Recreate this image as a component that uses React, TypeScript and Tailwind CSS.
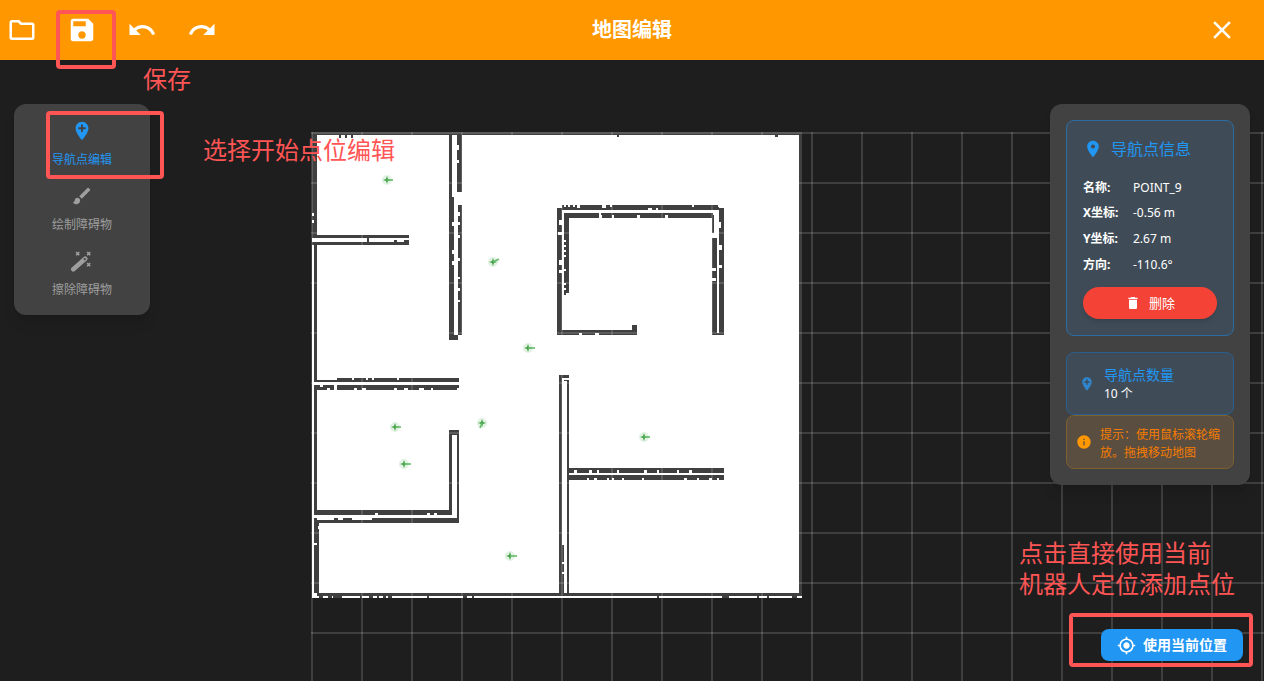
import { MdAddLocation, MdBrush, MdClose, MdDelete, MdInfo, MdLocationOn, MdMyLocation, MdRedo, MdSave, MdUndo } from 'react-icons/md'

const cjk = { fontFamily: '"Noto Sans", "Noto Sans CJK SC", sans-serif' }

// wall pieces of the occupancy map, [x, y, w, h] in page pixels
const walls: number[][] = [
  // outer edge
  [312, 132, 490, 3],
  [799, 132, 3, 464],
  [317, 593, 485, 3],
  [312, 135, 5, 101],
  [314, 245, 3, 136],
  [314, 390, 3, 123],
  [314, 523, 5, 70],
  // stub wall top left
  [312, 235, 97, 3],
  [312, 242, 97, 3],
  [367, 238, 2, 4],
  [394, 240, 3, 2],
  [404, 240, 5, 2],
  // long wall top middle
  [449, 132, 3, 60],
  [457, 132, 5, 60],
  [449, 192, 5, 148],
  [458, 205, 4, 130],
  [454, 335, 4, 5],
  // room
  [557, 208, 5, 125],
  [564, 215, 5, 80],
  [562, 205, 157, 5],
  [564, 213, 149, 5],
  [719, 208, 5, 125],
  [712, 238, 5, 95],
  [712, 215, 2, 18],
  [557, 330, 80, 5],
  [632, 325, 5, 5],
  [712, 333, 12, 2],
  // double wall middle left
  [314, 380, 145, 2],
  [337, 378, 122, 2],
  [314, 385, 145, 5],
  // lower left room
  [449, 430, 10, 5],
  [449, 435, 3, 78],
  [457, 435, 2, 88],
  [314, 510, 138, 5],
  [314, 518, 145, 5],
  // long wall bottom middle
  [559, 375, 10, 3],
  [559, 378, 3, 217],
  [567, 380, 2, 215],
  [562, 545, 2, 48],
  [564, 380, 3, 2],
  [569, 468, 155, 5],
  [569, 475, 155, 5],
]

// missing cells in those walls
const gaps: number[][] = [
  [312, 213, 2, 3], [312, 220, 2, 3], [312, 240, 5, 2], [312, 247, 2, 120],
  [312, 365, 2, 26], [312, 395, 2, 115], [312, 525, 2, 70], [312, 596, 490, 2],
  [457, 145, 2, 5], [457, 160, 2, 3],
  [452, 192, 2, 5], [454, 195, 4, 3], [452, 222, 2, 4],
  [452, 250, 2, 4], [452, 261, 2, 4], [458, 212, 2, 4], [458, 222, 2, 3],
  [458, 235, 2, 3], [458, 258, 2, 3], [458, 277, 2, 2], [458, 288, 2, 3], [458, 300, 2, 2],
  [564, 205, 2, 2], [568, 205, 2, 2], [573, 205, 2, 2], [577, 205, 3, 3], [602, 205, 4, 3],
  [610, 205, 2, 2], [648, 208, 4, 2], [656, 208, 2, 2], [692, 205, 2, 2], [718, 205, 5, 2],
  [599, 213, 2, 2], [599, 215, 3, 3], [612, 215, 2, 3], [637, 215, 3, 3], [665, 215, 3, 3],
  [559, 220, 5, 2], [559, 222, 3, 3], [558, 232, 4, 3], [564, 240, 2, 2], [564, 245, 2, 2],
  [564, 250, 2, 2], [564, 255, 2, 2], [559, 260, 5, 5], [564, 269, 2, 2], [559, 270, 4, 3],
  [564, 283, 2, 2], [564, 288, 2, 2], [566, 293, 3, 2],
  [716, 222, 3, 5], [717, 232, 2, 3], [719, 222, 2, 6], [719, 245, 3, 5], [719, 265, 3, 3],
  [712, 268, 4, 3], [712, 278, 4, 3], [579, 333, 3, 2], [595, 333, 4, 2],
  [319, 378, 18, 2], [352, 378, 2, 2], [366, 378, 2, 2], [372, 378, 2, 2], [397, 378, 2, 2],
  [320, 385, 3, 2], [327, 388, 3, 2], [334, 385, 3, 5], [354, 388, 3, 2], [362, 388, 4, 2],
  [394, 388, 3, 2], [404, 388, 4, 2], [419, 388, 5, 2], [431, 388, 2, 2], [457, 388, 2, 2],
  [375, 513, 3, 2], [427, 513, 3, 2], [434, 513, 3, 2], [317, 518, 17, 2], [338, 518, 5, 2],
  [352, 518, 20, 2], [318, 526, 2, 3], [314, 543, 3, 2],
  [562, 378, 3, 2], [564, 381, 3, 3], [562, 562, 2, 2], [562, 572, 2, 2],
  [574, 470, 3, 3], [589, 470, 3, 3], [597, 470, 2, 3], [617, 470, 2, 3], [644, 470, 3, 3],
  [657, 470, 2, 3], [677, 470, 2, 3], [689, 470, 3, 3],
  [587, 478, 2, 2], [594, 478, 3, 2], [607, 478, 2, 2], [612, 478, 2, 2], [622, 478, 2, 2],
  [642, 478, 2, 2], [684, 478, 3, 2], [697, 478, 2, 2], [709, 478, 3, 2], [717, 478, 2, 2],
]

// lone occupied cells along the top and bottom edge
const specks: number[][] = [
  [339, 135, 2, 3], [345, 135, 2, 3], [351, 135, 2, 3], [617, 135, 2, 2], [775, 135, 3, 2],
  [319, 596, 4, 2], [328, 596, 4, 2], [333, 596, 9, 2], [360, 596, 2, 2], [369, 596, 4, 2],
  [377, 596, 2, 2], [383, 596, 3, 2], [388, 596, 4, 2], [427, 596, 2, 2], [463, 596, 4, 2],
  [472, 596, 2, 2], [657, 596, 2, 2], [722, 596, 7, 2], [757, 596, 2, 2], [767, 596, 2, 2],
  [792, 596, 5, 2],
]

// navigation points: centre and heading tail
const points: number[][] = [
  [387, 180, 393, 180],
  [493, 262, 499, 259],
  [528, 348, 535, 348],
  [395, 427, 401, 427],
  [404, 464, 411, 464],
  [482, 423, 480, 428],
  [644, 437, 650, 437],
  [510, 556, 517, 556],
]

const xLines = Array.from({ length: 20 }, (_, i) => 312 + i * 50)
const yLines = Array.from({ length: 11 }, (_, i) => 133 + i * 50)

function MapCanvas() {
  return (
    <svg className="absolute inset-0 w-full h-full" viewBox="0 60 1264 621" shapeRendering="crispEdges">
      <rect x={312} y={133} width={490} height={465} fill="#ffffff" />
      {walls.map(([x, y, w, h], i) => (
        <rect key={i} x={x} y={y} width={w} height={h} fill="#404040" />
      ))}
      {gaps.map(([x, y, w, h], i) => (
        <rect key={i} x={x} y={y} width={w} height={h} fill="#ffffff" />
      ))}
      {specks.map(([x, y, w, h], i) => (
        <rect key={i} x={x} y={y} width={w} height={h} fill="#404040" />
      ))}
      {points.map(([cx, cy, tx, ty], i) => (
        <g key={i} shapeRendering="auto">
          <circle cx={cx} cy={cy} r={5} fill="#4caf50" opacity={0.16} />
          <path
            d={`M${cx - 4} ${cy}L${cx - 1} ${cy - 1}L${cx} ${cy - 4}L${cx + 1} ${cy - 1}L${cx + 4} ${cy}L${cx + 1} ${cy + 1}L${cx} ${cy + 4}L${cx - 1} ${cy + 1}Z`}
            fill="#43a047"
          />
          <line x1={cx} y1={cy} x2={tx} y2={ty} stroke="#66bb6a" strokeWidth={1.6} />
        </g>
      ))}
      {xLines.map((x) => (
        <rect key={x} x={x - 1} y={132} width={2} height={560} fill="#ffffff" opacity={0.15} />
      ))}
      {yLines.map((y) => (
        <rect key={y} x={311} y={y - 1} width={960} height={2} fill="#ffffff" opacity={0.15} />
      ))}
    </svg>
  )
}

function FolderIcon() {
  return (
    <svg width={30} height={30} viewBox="0 0 24 24" fill="none" stroke="currentColor" strokeWidth={2} strokeLinejoin="round">
      <path d="M4 5h5.3l2 2H20a1 1 0 0 1 1 1v10a1 1 0 0 1-1 1H4a1 1 0 0 1-1-1V6a1 1 0 0 1 1-1z" />
    </svg>
  )
}

function WandIcon() {
  return (
    <svg width={24} height={24} viewBox="0 0 24 24" fill="none" stroke="currentColor">
      <path d="M2.5 21L15.5 9.5" strokeWidth={5} strokeLinecap="round" />
      <circle cx={15} cy={10} r={1.2} fill="#424242" stroke="none" />
      <path d="M5.6 2.3l3.4 3.4M9 2.3L5.6 5.7M17.6 2.3l3.4 3.4M21 2.3l-3.4 3.4M17.6 14.3l3.4 3.4M21 14.3l-3.4 3.4" strokeWidth={1.7} />
    </svg>
  )
}

function Tool({ icon, label, active }: { icon: React.ReactNode; label: string; active?: boolean }) {
  return (
    <div className={`flex flex-col items-center h-[65px] pt-4 ${active ? 'text-[#2196f3]' : 'text-[#9e9e9e]'}`}>
      {icon}
      <span className="text-xs leading-[18px] mt-[9px]">{label}</span>
    </div>
  )
}

function Row({ label, value }: { label: string; value: string }) {
  return (
    <div className="flex items-center h-[25.6px] text-xs text-white">
      <span className="w-[50px] font-bold">{label}</span>
      <span>{value}</span>
    </div>
  )
}

export default function App() {
  return (
    <div className="relative flex flex-col w-[1264px] h-[681px] overflow-hidden bg-[#1e1e1e]" style={cjk}>
      {/* Toolbar */}
      <div className="relative flex items-center h-[60px] shrink-0 bg-[#ff9800] text-white">
        <div className="flex items-center gap-[30px] pl-[7px]">
          <FolderIcon />
          <MdSave size={30} />
          <MdUndo size={30} />
          <MdRedo size={30} />
        </div>
        <div className="absolute inset-x-0 text-center text-xl font-bold">地图编辑</div>
        <MdClose size={30} className="ml-auto mr-[27px]" />
      </div>

      {/* Editor */}
      <div className="relative flex-1">
        <MapCanvas />

        <div className="absolute left-[14px] top-[44px] w-[136px] h-[211px] rounded-xl bg-[#424242] shadow-lg">
          <Tool active label="导航点编辑" icon={<MdAddLocation size={24} />} />
          <Tool label="绘制障碍物" icon={<MdBrush size={24} />} />
          <Tool label="擦除障碍物" icon={<WandIcon />} />
        </div>

        <div className="absolute left-[1050px] top-[44px] w-[200px] h-[381px] rounded-xl bg-[#424242] shadow-lg p-4">
          <div className="h-[216px] rounded-lg border border-[#2b6da3] bg-[#3f4c57] px-4 pt-[14px]">
            <div className="flex items-center gap-2 h-7 text-[#2196f3]">
              <MdLocationOn size={20} />
              <span className="text-base">导航点信息</span>
            </div>
            <div className="mt-3">
              <Row label="名称:" value="POINT_9" />
              <Row label="X坐标:" value="-0.56 m" />
              <Row label="Y坐标:" value="2.67 m" />
              <Row label="方向:" value="-110.6°" />
            </div>
            <button className="flex items-center justify-center gap-2 w-full h-8 mt-[10px] rounded-full bg-[#f44336] text-white text-[13px] shadow-md">
              <MdDelete size={16} />
              删除
            </button>
          </div>

          <div className="flex items-center gap-[9px] h-[63px] mt-4 rounded-lg border border-[#2a5f8c] bg-[#3f4c57] pl-3">
            <MdAddLocation size={16} className="text-[#2f86cf]" />
            <div>
              <div className="text-sm leading-[20px] text-[#2196f3]">导航点数量</div>
              <div className="text-xs leading-[18px] text-white">10 个</div>
            </div>
          </div>

          <div className="flex items-center gap-2 h-[54px] rounded-lg border border-[#7d5f30] bg-[#5a4e40] pl-[9px] pr-2">
            <MdInfo size={16} className="shrink-0 text-[#ff9800]" />
            <div className="pt-[3px] text-xs leading-[18px] text-[#f57c00]">提示：使用鼠标滚轮缩放。拖拽移动地图</div>
          </div>
        </div>

        <button className="absolute left-[1101px] top-[569px] flex items-center w-[142px] h-8 rounded-lg bg-[#2196f3] pl-4 gap-[7px] text-white text-sm font-bold">
          <MdMyLocation size={19} />
          使用当前位置
        </button>
      </div>

      {/* Red annotations */}
      <div className="absolute left-[56px] top-[10px] w-[60px] h-[59px] rounded-sm border-4 border-[#ff5555]" />
      <div className="absolute left-[46px] top-[111px] w-[118px] h-[68px] rounded-sm border-4 border-[#ff5555]" />
      <div className="absolute left-[1069px] top-[613px] w-[184px] h-[54px] rounded-sm border-4 border-[#ff5555]" />
      <div className="absolute left-[143px] top-[61px] text-2xl leading-[36px] text-[#ff5555]">保存</div>
      <div className="absolute left-[203px] top-[132px] text-2xl leading-[36px] text-[#ff5555]">选择开始点位编辑</div>
      <div className="absolute left-[1019px] top-[537px] text-2xl leading-[31px] text-[#ff5555]">
        点击直接使用当前
        <br />
        机器人定位添加点位
      </div>
    </div>
  )
}
